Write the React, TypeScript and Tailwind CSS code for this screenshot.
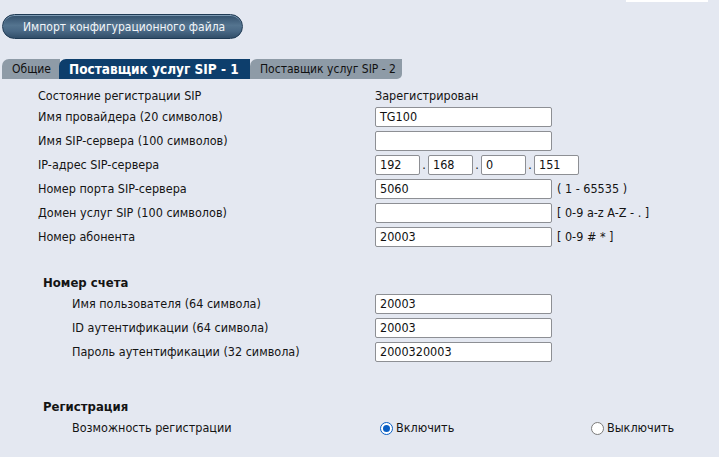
import React from "react";

const font = { fontFamily: '"DejaVu Sans Condensed", "DejaVu Sans", "Liberation Sans", sans-serif' };

function TextBox({ value = "", className = "w-[177px]" }: { value?: string; className?: string }) {
  return (
    <div
      className={`h-[20px] ${className} bg-white border border-[#8d8f94] rounded-[2px] pl-[4px] flex items-center text-[12.5px] text-[#111]`}
    >
      {value}
    </div>
  );
}

function Row({ label, children, indent = false }: { label: string; children?: React.ReactNode; indent?: boolean }) {
  return (
    <div className="flex items-center h-[20px]">
      <div className={`w-[337px] ${indent ? "pl-[34px]" : ""} shrink-0`}>{label}</div>
      <div className="flex items-center">{children}</div>
    </div>
  );
}

function Hint({ children }: { children: React.ReactNode }) {
  return <span className="ml-[5px]">{children}</span>;
}

function Radio({ checked, label }: { checked: boolean; label: string }) {
  return (
    <div className="flex items-center">
      {checked ? (
        <span className="w-[13px] h-[13px] rounded-full border-[1.5px] border-[#0a5fc4] bg-white flex items-center justify-center">
          <span className="w-[7px] h-[7px] rounded-full bg-[#0a5fc4]" />
        </span>
      ) : (
        <span className="w-[13px] h-[13px] rounded-full border-[1.5px] border-[#7b7b7b] bg-white" />
      )}
      <span className="ml-[3px]">{label}</span>
    </div>
  );
}

export default function App() {
  return (
    <div className="w-[719px] h-[457px] bg-[#e4e8f1] relative overflow-hidden text-[12.5px] text-[#141414]" style={font}>
      {/* strip of a field cut off at the top edge */}
      <div className="absolute left-[626px] top-0 w-[82px] h-[2px] bg-white" />

      <div className="pt-[14px] pl-[2px]">
        <button
          className="h-[25px] w-[241px] rounded-full border border-[#1f3a54] text-[#f2f5f8] text-[12px] pl-[20px] text-left shadow-[inset_0_1px_0_#7d9ab3]"
          style={{ background: "linear-gradient(#324f6b 0%, #54748f 45%, #496885 70%, #314e69 100%)", ...font }}
        >
          Импорт конфигурационного файла
        </button>
      </div>

      {/* tabs */}
      <div className="mt-[20px] pl-[2px] flex h-[20px] items-stretch text-[12px]">
        <div className="w-[58px] bg-[#8e9ba7] rounded-tl-[7px] flex items-center pl-[10px] text-[#111]">Общие</div>
        <div className="w-[191px] bg-[#0d3e6c] rounded-tl-[7px] -ml-px flex items-center pl-[10px] text-white font-bold text-[13.5px]">
          Поставщик услуг SIP - 1
        </div>
        <div className="w-[152px] bg-[#8e9ba7] rounded-tl-[7px] rounded-br-[5px] flex items-center pl-[10px] text-[#111]">
          Поставщик услуг SIP - 2
        </div>
      </div>

      <div className="pl-[38px] pt-[7px]">
        <Row label="Состояние регистрации SIP">
          <span>Зарегистрирован</span>
        </Row>
        <div className="mt-px flex flex-col gap-[4px]">
          <Row label="Имя провайдера (20 символов)">
            <TextBox value="TG100" />
          </Row>
          <Row label="Имя SIP-сервера (100 символов)">
            <TextBox />
          </Row>
          <Row label="IP-адрес SIP-сервера">
            <div className="flex items-center">
              <TextBox value="192" className="w-[45px]" />
              <span className="w-[8px] text-center">.</span>
              <TextBox value="168" className="w-[45px]" />
              <span className="w-[8px] text-center">.</span>
              <TextBox value="0" className="w-[45px]" />
              <span className="w-[8px] text-center">.</span>
              <TextBox value="151" className="w-[45px]" />
            </div>
          </Row>
          <Row label="Номер порта SIP-сервера">
            <TextBox value="5060" />
            <Hint>( 1 - 65535 )</Hint>
          </Row>
          <Row label="Домен услуг SIP (100 символов)">
            <TextBox />
            <Hint>[ 0-9 a-z A-Z - . ]</Hint>
          </Row>
          <Row label="Номер абонента">
            <TextBox value="20003" />
            <Hint>[ 0-9 # * ]</Hint>
          </Row>
        </div>

        <div className="mt-[26px] h-[20px] flex items-center pl-[5px] font-bold text-[13px]">Номер счета</div>
        <div className="mt-px flex flex-col gap-[4px]">
          <Row label="Имя пользователя (64 символа)" indent>
            <TextBox value="20003" />
          </Row>
          <Row label="ID аутентификации (64 символа)" indent>
            <TextBox value="20003" />
          </Row>
          <Row label="Пароль аутентификации (32 символа)" indent>
            <TextBox value="2000320003" />
          </Row>
        </div>

        <div className="mt-[35px] h-[20px] flex items-center pl-[5px] font-bold text-[13px]">Регистрация</div>
        <div className="mt-px">
          <Row label="Возможность регистрации" indent>
            <div className="flex items-center pl-[5px]">
              <div className="w-[211px]">
                <Radio checked label="Включить" />
              </div>
              <Radio checked={false} label="Выключить" />
            </div>
          </Row>
        </div>
      </div>
    </div>
  );
}
